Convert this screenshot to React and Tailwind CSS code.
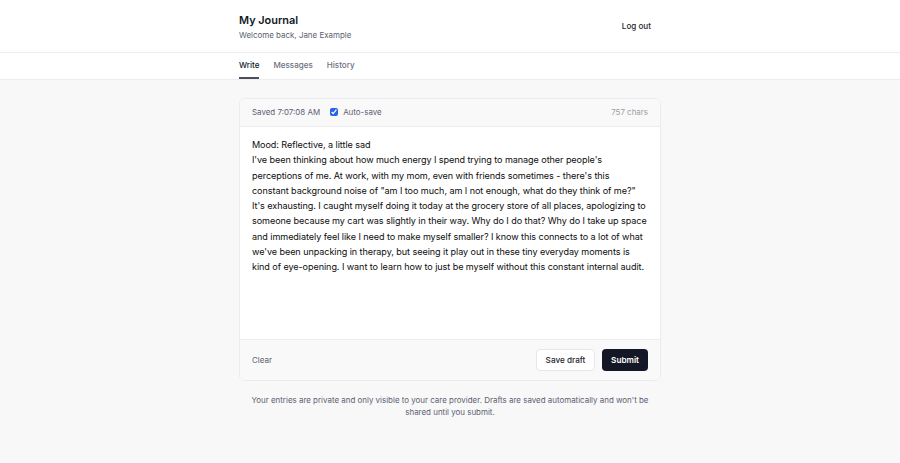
import React, { useState } from "react";

// line breaks follow the wrap in the design
const BODY = [
  "Mood: Reflective, a little sad",
  "I've been thinking about how much energy I spend trying to manage other people's",
  "perceptions of me. At work, with my mom, even with friends sometimes - there's this",
  'constant background noise of "am I too much, am I not enough, what do they think of me?"',
  "It's exhausting. I caught myself doing it today at the grocery store of all places, apologizing to",
  "someone because my cart was slightly in their way. Why do I do that? Why do I take up space",
  "and immediately feel like I need to make myself smaller? I know this connects to a lot of what",
  "we've been unpacking in therapy, but seeing it play out in these tiny everyday moments is",
  "kind of eye-opening. I want to learn how to just be myself without this constant internal audit.",
].join("\n");

const tabs = ["Write", "Messages", "History"];

const App = () => {
  const [active, setActive] = useState("Write");
  const [text, setText] = useState(BODY);
  const [autoSave, setAutoSave] = useState(true);

  return (
    <div className="min-h-[463px] bg-[#f8f8f9] font-['Inter',sans-serif] text-[#111827]">
      {/* header */}
      <header className="bg-white border-b border-[#ececef]">
        <div className="max-w-[446px] mx-auto px-3 h-[52px] flex items-center justify-between">
          <div className="flex flex-col gap-[3px] pt-[1px]">
            <h1 className="text-[10.9px] leading-[14px] font-semibold">My Journal</h1>
            <p className="text-[7.95px] leading-[11px] text-[#5b6170]">
              Welcome back, Jane Example
            </p>
          </div>
          <button className="text-[8.1px] font-medium text-[#1f2430] pl-2.5 py-1 mr-[10px]">
            Log out
          </button>
        </div>
      </header>

      {/* tabs */}
      <nav className="bg-white border-b border-[#ececef]">
        <div className="max-w-[446px] mx-auto px-3 flex gap-[14px] h-[26px]">
          {tabs.map((t) => (
            <button
              key={t}
              onClick={() => setActive(t)}
              className={
                t === active
                  ? "text-[8.05px] font-medium text-[#111827] border-b-2 border-[#4b4f5a] pt-[1px]"
                  : "text-[8.05px] font-medium text-[#6b7080] border-b-2 border-transparent pt-[1px]"
              }
            >
              {t}
            </button>
          ))}
        </div>
      </nav>

      <main className="max-w-[446px] mx-auto px-3 pt-[18px]">
        <div className="bg-white border border-[#ececef] rounded-[6px] overflow-hidden">
          <div className="h-[28px] bg-[#f9f9fa] border-b border-[#ececef] px-3 flex items-center justify-between text-[7.95px]">
            <div className="flex items-center gap-[10px] text-[#5b6170]">
              <span>Saved 7:07:08 AM</span>
              <label className="flex items-center gap-[5px]">
                <input
                  type="checkbox"
                  checked={autoSave}
                  onChange={(e) => setAutoSave(e.target.checked)}
                  className="w-[8px] h-[8px] accent-[#2563eb]"
                />
                Auto-save
              </label>
            </div>
            <span className="text-[#9a9ea8]">{text.length} chars</span>
          </div>

          <textarea
            value={text}
            wrap="off"
            onChange={(e) => setText(e.target.value)}
            className="block w-full h-[212px] resize-none overflow-hidden whitespace-pre pl-3 pr-2 pt-[10px] text-[9.06px] leading-[15.25px] tracking-[-0.06px] text-[#0d0d0d] outline-none font-['Inter',sans-serif]"
          />

          <div className="h-[41px] bg-[#f9f9fa] border-t border-[#ececef] px-3 flex items-center justify-between">
            <button className="text-[8px] text-[#5b6170]">Clear</button>
            <div className="flex items-center gap-[7px]">
              <button className="h-[22px] w-[59px] bg-white border border-[#e5e6ea] rounded-[4px] text-[8.2px] font-medium text-[#1f2430]">
                Save draft
              </button>
              <button className="h-[22px] w-[46px] bg-[#141826] rounded-[4px] text-[8.2px] font-semibold text-white">
                Submit
              </button>
            </div>
          </div>
        </div>

        <p className="mt-[13px] text-center text-[7.95px] leading-[12px] text-[#5b6170]">
          Your entries are private and only visible to your care provider. Drafts are saved automatically and won't be shared until you submit.
        </p>
      </main>
    </div>
  );
};

export default App;
